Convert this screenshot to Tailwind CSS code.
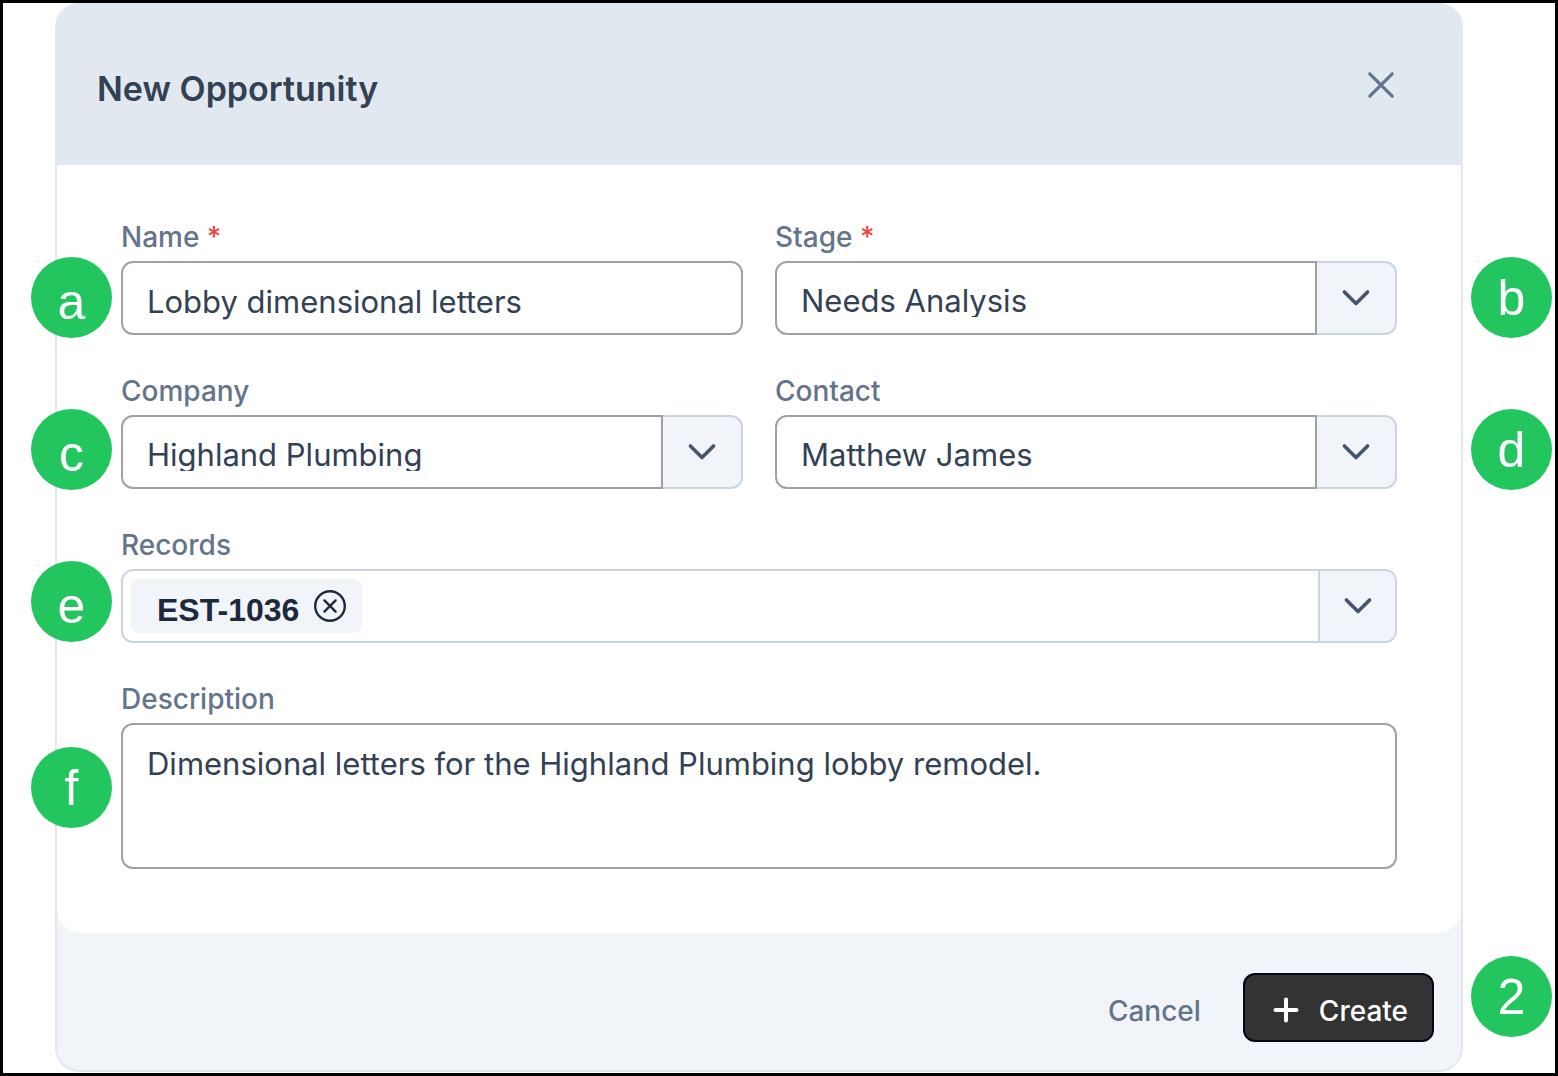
<!DOCTYPE html>
<html lang="en">

<head>
    <meta charset="UTF-8" />
    <meta name="viewport" content="width=device-width, initial-scale=1.0" />
    <title>New Opportunity</title>
    <script src="https://cdn.jsdelivr.net/npm/@tailwindcss/browser@4"></script>
</head>

<body class="relative min-h-screen border-3 border-black bg-white pr-[92px] pl-[52px] font-['Inter',sans-serif] text-[#334155]">
    <div role="dialog" aria-labelledby="title" class="overflow-hidden rounded-3xl border-2 border-t-0 border-slate-200 bg-slate-100">
        <header class="flex items-center justify-between bg-slate-200 pt-16 pr-16 pb-[54px] pl-10">
            <h1 id="title" class="text-[34px] leading-[44px] font-semibold">New Opportunity</h1>
            <button type="button" aria-label="Close" class="mb-2 text-[#64748b]">
                <svg class="size-8" viewBox="0 0 32 32" fill="none" stroke="currentColor" stroke-width="3.2" stroke-linecap="round">
                    <path d="M4.800 4.800l22.400 22.400M27.200 4.800L4.800 27.200" />
                </svg>
            </button>
        </header>

        <form id="opportunityForm">
            <div class="grid grid-cols-2 gap-x-8 gap-y-10 rounded-b-3xl bg-white px-16 pt-14 pb-16">
                <div>
                    <label for="name" class="mb-2 block text-[28px] leading-8 font-medium text-[#64748b]">Name <span class="text-[#ef4444]">*</span></label>
                    <input id="name" type="text" name="name" required value="Lobby dimensional letters"
                        class="block h-[74px] w-full rounded-xl border-2 border-neutral-400 pt-[22px] pb-4 pl-6 text-[31px] leading-8" />
                </div>

                <div>
                    <label for="stage" class="mb-2 block text-[28px] leading-8 font-medium text-[#64748b]">Stage <span class="text-[#ef4444]">*</span></label>
                    <div class="flex h-[74px]">
                        <select id="stage" name="stage" required
                            class="min-w-0 flex-1 appearance-none rounded-l-xl border-2 border-neutral-400 pt-[22px] pb-4 pl-6 text-[31px] leading-8">
                            <option>Needs Analysis</option>
                        </select>
                        <button type="button" aria-label="Show stages" class="flex w-20 items-center justify-center rounded-r-xl border-2 border-l-0 border-slate-300 bg-slate-100 text-slate-600">
                            <svg class="size-8" viewBox="0 0 32 32" fill="none" stroke="currentColor" stroke-width="3.6" stroke-linecap="round" stroke-linejoin="round">
                                <path d="M4.400 10L16 21.600 27.600 10" />
                            </svg>
                        </button>
                    </div>
                </div>

                <div>
                    <label for="company" class="mb-2 block text-[28px] leading-8 font-medium text-[#64748b]">Company</label>
                    <div class="flex h-[74px]">
                        <select id="company" name="company"
                            class="min-w-0 flex-1 appearance-none rounded-l-xl border-2 border-neutral-400 pt-[22px] pb-4 pl-6 text-[31px] leading-8">
                            <option>Highland Plumbing</option>
                        </select>
                        <button type="button" aria-label="Show companies" class="flex w-20 items-center justify-center rounded-r-xl border-2 border-l-0 border-slate-300 bg-slate-100 text-slate-600">
                            <svg class="size-8" viewBox="0 0 32 32" fill="none" stroke="currentColor" stroke-width="3.6" stroke-linecap="round" stroke-linejoin="round">
                                <path d="M4.400 10L16 21.600 27.600 10" />
                            </svg>
                        </button>
                    </div>
                </div>

                <div>
                    <label for="contact" class="mb-2 block text-[28px] leading-8 font-medium text-[#64748b]">Contact</label>
                    <div class="flex h-[74px]">
                        <select id="contact" name="contact"
                            class="min-w-0 flex-1 appearance-none rounded-l-xl border-2 border-neutral-400 pt-[22px] pb-4 pl-6 text-[31px] leading-8">
                            <option>Matthew James</option>
                        </select>
                        <button type="button" aria-label="Show contacts" class="flex w-20 items-center justify-center rounded-r-xl border-2 border-l-0 border-slate-300 bg-slate-100 text-slate-600">
                            <svg class="size-8" viewBox="0 0 32 32" fill="none" stroke="currentColor" stroke-width="3.6" stroke-linecap="round" stroke-linejoin="round">
                                <path d="M4.400 10L16 21.600 27.600 10" />
                            </svg>
                        </button>
                    </div>
                </div>

                <div class="col-span-2">
                    <label for="records" class="mb-2 block text-[28px] leading-8 font-medium text-[#64748b]">Records</label>
                    <div class="flex h-[74px] overflow-hidden rounded-xl border-2 border-slate-300">
                        <div class="flex min-w-0 flex-1 items-start px-2 pt-2">
                            <span class="flex h-[54px] items-center gap-[15px] rounded-lg bg-slate-100 pr-4 pl-[26px] font-['Liberation_Sans',sans-serif] text-[32px] leading-8 font-bold text-slate-800">
                                <span class="pt-2">EST-1036</span>
                                <button type="button" aria-label="Remove EST-1036">
                                    <svg class="block size-8" viewBox="0 0 32 32" fill="none" stroke="currentColor" stroke-width="2.4" stroke-linecap="round">
                                        <circle cx="16" cy="16" r="14.8" />
                                        <path d="M10.400 10.400l11.200 11.200M21.600 10.400L10.400 21.600" />
                                    </svg>
                                </button>
                            </span>
                            <input id="records" type="text" name="records" class="h-full min-w-0 flex-1 outline-none" />
                        </div>
                        <button type="button" aria-label="Show records" class="flex w-[77px] items-center justify-center border-l-2 border-slate-300 bg-slate-100 text-slate-600">
                            <svg class="size-8" viewBox="0 0 32 32" fill="none" stroke="currentColor" stroke-width="3.6" stroke-linecap="round" stroke-linejoin="round">
                                <path d="M4.400 10L16 21.600 27.600 10" />
                            </svg>
                        </button>
                    </div>
                </div>

                <div class="col-span-2">
                    <label for="description" class="mb-2 block text-[28px] leading-8 font-medium text-[#64748b]">Description</label>
                    <textarea id="description" name="description"
                        class="block h-[146px] w-full resize-none rounded-xl border-2 border-neutral-400 px-6 py-4 text-[31px] leading-[46px]">Dimensional letters for the Highland Plumbing lobby remodel.</textarea>
                </div>
            </div>

            <footer class="flex items-center justify-end gap-[42px] pt-10 pr-[27px] pb-7 pl-7 text-[28px] leading-8 font-medium">
                <button type="button" class="pt-1.5 text-[#64748b]">Cancel</button>
                <button type="submit" class="flex h-[69px] items-center gap-[17px] rounded-xl border-2 border-slate-950 bg-[#333333] pt-1 pr-6 pl-[25px] text-white">
                    <svg class="size-8" viewBox="0 0 32 32" fill="none" stroke="currentColor" stroke-width="4" stroke-linecap="round">
                        <path d="M16 5.500v21M5.500 16h21" />
                    </svg>
                    <span class="pt-0.5">Create</span>
                </button>
            </footer>
        </form>
    </div>

    <!-- step markers -->
    <div class="font-['Liberation_Sans',sans-serif] text-[50px] leading-none text-white">
        <span class="absolute top-[254px] left-7 flex size-[81px] items-center justify-center rounded-full bg-[#22c55e] pt-2">a</span>
        <span class="absolute top-[254px] right-[3px] flex size-[81px] items-center justify-center rounded-full bg-[#22c55e]">b</span>
        <span class="absolute top-[406px] left-7 flex size-[81px] items-center justify-center rounded-full bg-[#22c55e] pt-2">c</span>
        <span class="absolute top-[406px] right-[3px] flex size-[81px] items-center justify-center rounded-full bg-[#22c55e]">d</span>
        <span class="absolute top-[558px] left-7 flex size-[81px] items-center justify-center rounded-full bg-[#22c55e] pt-2">e</span>
        <span class="absolute top-[744px] left-7 flex size-[81px] items-center justify-center rounded-full bg-[#22c55e]">f</span>
        <span class="absolute top-[953px] right-[3px] flex size-[81px] items-center justify-center rounded-full bg-[#22c55e]">2</span>
    </div>
</body>

</html>
